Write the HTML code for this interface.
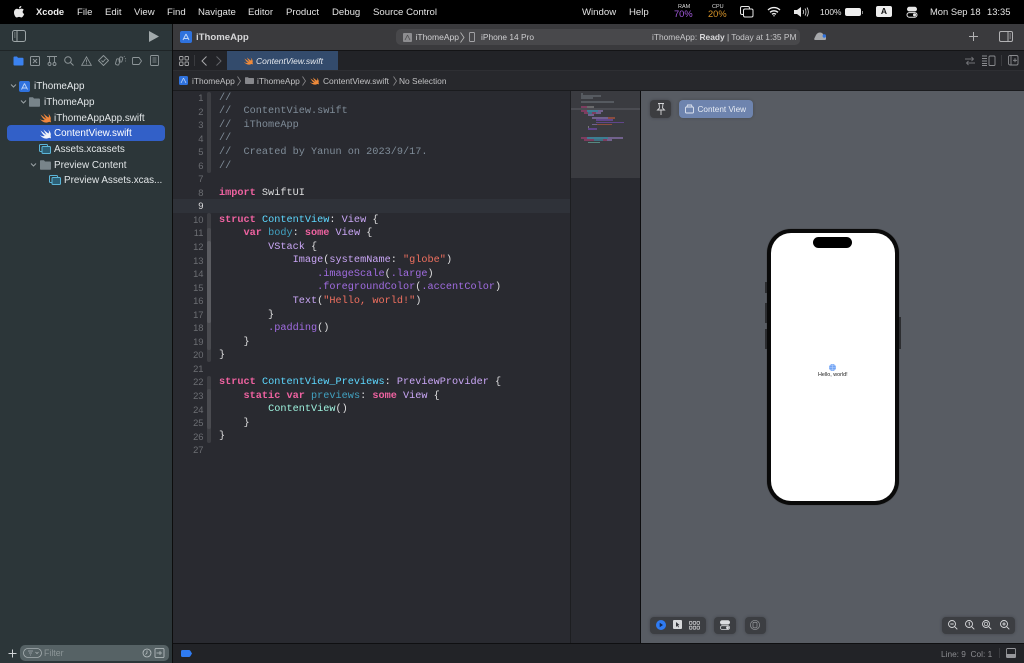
<!DOCTYPE html>
<html><head><meta charset="utf-8"><style>
*{box-sizing:border-box;margin:0;padding:0}
html,body{width:1024px;height:663px;overflow:hidden;background:#292a30;font-family:"Liberation Sans",sans-serif}
#w{position:absolute;left:0;top:0;width:1024px;height:663px;overflow:hidden;filter:blur(.35px)}
.a{position:absolute}
.t{position:absolute;white-space:nowrap;line-height:14px}
.m{top:6px;font-size:9.6px;color:#e4e4e4}
.s{font-size:9.9px;color:#e2e6e8}
.p{top:73.5px;font-size:8.4px;color:#c0c0c2}
svg{position:absolute;overflow:visible}
#code{position:absolute;left:219px;top:91.8px;font:10.22px/13.54px "Liberation Mono",monospace;color:#dfdfe0;white-space:pre}
#nums{position:absolute;left:180px;width:23.5px;top:91px;font:9.4px/13.54px "Liberation Sans",sans-serif;color:#6c6e73;text-align:right}
.c{color:#7f8c98}.k{color:#ee62a0;font-weight:bold}.b{color:#5dd8ff}.v{color:#c9a6f5}.st{color:#f0705f}.f{color:#a06ce0}.d{color:#41a1c0}.g{color:#9ef1dd}
.bar{position:absolute;left:207px;width:4px;background:#3d3e43;border-radius:2px}
.mm{position:absolute;height:1.5px;opacity:.8}
</style></head><body><div id="w">
<!-- menu bar -->
<div class="a" style="left:0;top:0;width:1024px;height:24px;background:#000"></div>
<svg style="left:13px;top:5px" width="12" height="14" viewBox="0 0 12 14"><path d="M8.3 1C8.4 2.4 7.2 3.5 6 3.4 5.900 2.200 7 1 8.300 1ZM6 4.200C6.700 4.200 7.400 3.600 8.500 3.600 9.400 3.600 10.300 4.100 10.800 4.900 9.100 5.900 9.400 8.300 11.200 9 10.700 10.400 9.500 12.500 8.400 12.500 7.500 12.500 7.100 11.900 6.100 11.900 5.100 11.900 4.600 12.500 3.800 12.500 2.500 12.500 1 9.900 1 7.600 1 5.200 2.500 3.800 3.900 3.800 4.800 3.800 5.400 4.200 6 4.200Z" fill="#e8e8e8"/></svg>
<div class="t m" style="left:36px;top:5px;font-weight:bold;color:#eee;font-size:9.4px">Xcode</div>
<div class="t m" style="left:77px">File</div>
<div class="t m" style="left:105px">Edit</div>
<div class="t m" style="left:134px">View</div>
<div class="t m" style="left:167px">Find</div>
<div class="t m" style="left:198px">Navigate</div>
<div class="t m" style="left:248px">Editor</div>
<div class="t m" style="left:286px">Product</div>
<div class="t m" style="left:332px">Debug</div>
<div class="t m" style="left:373px">Source Control</div>
<div class="t m" style="left:582px">Window</div>
<div class="t m" style="left:629px">Help</div>
<div class="t" style="left:678px;top:4px;font-size:5.500px;line-height:7px;color:#ddd">RAM</div>
<div class="t" style="left:674px;top:9px;font-size:9.300px;line-height:11px;color:#a55be0">70%</div>
<div class="t" style="left:712px;top:4px;font-size:5.500px;line-height:7px;color:#ddd">CPU</div>
<div class="t" style="left:708px;top:9px;font-size:9.300px;line-height:11px;color:#d9952a">20%</div>
<svg style="left:740px;top:6px" width="14" height="12" fill="none" stroke="#e6e6e6" stroke-width="1"><rect x="0.500" y="0.500" width="9" height="8" rx="1.500"/><rect x="3.500" y="3" width="9.500" height="8" rx="1.500" fill="#000"/></svg>
<svg style="left:767px;top:6px" width="14" height="11" fill="none" stroke="#eee" stroke-width="1.400"><path d="M1 4C4.500.8 9.500.8 13 4M3 6.300C5.300 4.300 8.700 4.300 11 6.300M5 8.300C6.200 7.400 7.800 7.400 9 8.300"/><circle cx="7" cy="9.800" r=".7" fill="#eee" stroke="none"/></svg>
<svg style="left:794px;top:6px" width="15" height="12" fill="none" stroke="#e6e6e6"><path d="M0 4H3L7 1V11L3 8H0Z" fill="#e6e6e6" stroke="none"/><path d="M9 4C9.700 5 9.700 7 9 8M11 2.500C12.300 4.500 12.300 7.500 11 9.500M13 1.500C14.800 4.500 14.800 7.500 13 10.500" stroke-width=".8"/></svg>
<div class="t m" style="left:820px;top:5px;font-size:8.400px">100%</div>
<div class="a" style="left:845px;top:8px;width:16px;height:8px;border-radius:2px;background:#eee"></div>
<div class="a" style="left:862px;top:10.500px;width:1px;height:3px;background:#888"></div>
<div class="a" style="left:876px;top:6px;width:16px;height:11px;border-radius:2px;background:#eee;color:#111;font-size:8.500px;line-height:11px;text-align:center;font-weight:bold">A</div>
<svg style="left:906px;top:6px" width="12" height="12"><rect x="1" y=".8" width="10" height="4.600" rx="2.300" fill="#e6e6e6"/><rect x="1" y="6.600" width="10" height="4.600" rx="2.300" fill="none" stroke="#e6e6e6"/><circle cx="8.500" cy="8.900" r="1.500" fill="#e6e6e6"/></svg>
<div class="t m" style="left:930px;top:5px;font-size:9.400px">Mon Sep 18</div>
<div class="t m" style="left:987px;top:5px;font-size:9.400px">13:35</div>

<!-- sidebar -->
<div class="a" style="left:0;top:24px;width:172px;height:639px;background:#2c3639"></div>
<div class="a" style="left:0;top:50px;width:172px;height:1px;background:#1f2527"></div>
<div class="a" style="left:172px;top:24px;width:1px;height:639px;background:#0d0d0d"></div>
<svg style="left:12px;top:30px" width="15" height="13" fill="none" stroke="#9ea6a8"><rect x=".5" y=".5" width="13" height="11" rx="2"/><path d="M5 .5V11.500"/><path d="M2 3H3.500M2 5H3.500M2 7H3.500" stroke-width=".7"/></svg>
<svg style="left:148px;top:30px" width="12" height="13"><path d="M1 1L11 6.500L1 12Z" fill="#a2aaac"/></svg>
<!-- nav icons -->
<svg style="left:13px;top:56px" width="11" height="10"><path d="M.5 1.500Q.5.500 1.500.500H4L5 1.800H9.500Q10.500 1.800 10.500 2.800V8.500Q10.500 9.500 9.500 9.500H1.500Q.5 9.500.5 8.500Z" fill="#3b82f0"/></svg>
<svg style="left:30px;top:56px" width="10" height="10" fill="none" stroke="#8e9699"><rect x=".5" y=".5" width="9" height="9" rx="1"/><path d="M3 3L7 7M7 3L3 7"/></svg>
<svg style="left:47px;top:56px" width="10" height="10" fill="none" stroke="#8e9699" stroke-width=".9"><path d="M0 .5H10M2.500.5V6M7.500.5V6"/><circle cx="2.500" cy="8" r="1.500"/><circle cx="7.500" cy="8" r="1.500"/></svg>
<svg style="left:64px;top:56px" width="10" height="10" fill="none" stroke="#8e9699" stroke-width="1"><circle cx="4" cy="4" r="3.300"/><path d="M6.500 6.500L9.500 9.500"/></svg>
<svg style="left:81px;top:56px" width="11" height="10" fill="none" stroke="#8e9699" stroke-width=".9"><path d="M5.500.8L10.300 9.300H.7Z"/><path d="M5.500 3.500V6.500M5.500 7.300V8.300"/></svg>
<svg style="left:98px;top:55px" width="11" height="11" fill="none" stroke="#8e9699" stroke-width=".9"><path d="M5.500.5L10.500 5.500L5.500 10.500L.5 5.500Z" stroke-linejoin="round"/><path d="M3.500 5.500L5 7L7.500 4"/></svg>
<svg style="left:115px;top:55px" width="12" height="11" fill="none" stroke="#8e9699" stroke-width=".9"><rect x="1" y="4" width="3.500" height="6" rx="1" transform="rotate(15 3 7)"/><rect x="4.500" y="2" width="3" height="5" rx="1" transform="rotate(15 6 4)"/><path d="M9 1L9.500 2M11 3.500L10 4M11 6H10" stroke-width=".7"/></svg>
<svg style="left:132px;top:57px" width="10" height="8" fill="none" stroke="#8e9699" stroke-width=".9"><path d="M1.500.5H7L9.500 4L7 7.500H1.500Q.5 7.500.5 6.500V1.500Q.5.500 1.500.500Z"/></svg>
<svg style="left:150px;top:55px" width="9" height="11" fill="none" stroke="#8e9699" stroke-width=".9"><rect x=".5" y=".5" width="8" height="10" rx="1"/><path d="M2.500 3H6.500M2.500 5H6.500M2.500 7H6.500" stroke-width=".7"/></svg>
<!-- tree -->
<div class="a" style="left:7px;top:125px;width:158px;height:16px;border-radius:4px;background:#3260c8"></div>
<svg style="left:10px;top:83px" width="7" height="6" fill="none" stroke="#9aa2a5"><path d="M1 1.500L3.500 4L6 1.500"/></svg>
<svg style="left:20px;top:99px" width="7" height="6" fill="none" stroke="#9aa2a5"><path d="M1 1.500L3.500 4L6 1.500"/></svg>
<svg style="left:30px;top:162px" width="7" height="6" fill="none" stroke="#9aa2a5"><path d="M1 1.500L3.500 4L6 1.500"/></svg>
<svg style="left:19px;top:81px" width="11" height="11"><rect width="11" height="11" rx="2" fill="#2f72de"/><path d="M5.500 2.500L8.500 8.500M5.500 2.500L2.500 8.500M3 7H8" stroke="#bcd4f7" fill="none" stroke-width=".9"/></svg>
<div class="t s" style="left:34px;top:80px;color:#e6eaec">iThomeApp</div>
<svg style="left:29px;top:97px" width="11" height="10"><path d="M0 1Q0 .3.8.3H4L5 1.500H10Q11 1.500 11 2.500V9Q11 9.800 10 9.800H1Q0 9.800 0 9Z" fill="#78848a"/></svg>
<div class="t s" style="left:44px;top:96px">iThomeApp</div>
<svg style="left:40px;top:113px" width="11" height="10"><path d="M.5 1.500C3 3.500 5 5 6.500 6C5 3.500 4 2 3.500.5C5.500 2.500 7 3.500 8.500 4.500C9.800 2.500 8 .5 8 .5C10 2 11.500 5 10.500 7C11 8 11 9.500 11 9.500C10 8.500 9 8.800 8 9.300C5.500 10.200 2 9 0 6C2 7.300 3.800 7.500 4.800 7C3 5.800 1.500 3.500.5 1.500Z" fill="#f0863c"/></svg>
<div class="t s" style="left:54px;top:111.500px">iThomeAppApp.swift</div>
<svg style="left:40px;top:129px" width="11" height="10"><path d="M.5 1.500C3 3.500 5 5 6.500 6C5 3.500 4 2 3.500.5C5.500 2.500 7 3.500 8.500 4.500C9.800 2.500 8 .5 8 .5C10 2 11.500 5 10.500 7C11 8 11 9.500 11 9.500C10 8.500 9 8.800 8 9.300C5.500 10.200 2 9 0 6C2 7.300 3.800 7.500 4.800 7C3 5.800 1.500 3.500.5 1.500Z" fill="#f2f4fa"/></svg>
<div class="t s" style="left:54px;top:127px;color:#fff">ContentView.swift</div>
<svg style="left:39px;top:144px" width="12" height="10" fill="none" stroke="#5bb5d8"><rect x=".5" y=".5" width="8" height="7" rx="1"/><rect x="3" y="2.500" width="8.500" height="7" rx="1" fill="#2c5f75"/></svg>
<div class="t s" style="left:54px;top:143px">Assets.xcassets</div>
<svg style="left:40px;top:160px" width="11" height="10"><path d="M0 1Q0 .3.8.3H4L5 1.500H10Q11 1.500 11 2.500V9Q11 9.800 10 9.800H1Q0 9.800 0 9Z" fill="#78848a"/></svg>
<div class="t s" style="left:54px;top:158.500px">Preview Content</div>
<svg style="left:49px;top:175px" width="12" height="10" fill="none" stroke="#5bb5d8"><rect x=".5" y=".5" width="8" height="7" rx="1"/><rect x="3" y="2.500" width="8.500" height="7" rx="1" fill="#2c5f75"/></svg>
<div class="t s" style="left:64px;top:174px">Preview Assets.xcas...</div>
<!-- filter -->
<svg style="left:8px;top:649px" width="9" height="9" stroke="#d0d4d6" stroke-width="1"><path d="M4.500.5V8.500M.5 4.500H8.500"/></svg>
<div class="a" style="left:20px;top:645px;width:149px;height:16px;border-radius:5px;background:#566265"></div>
<svg style="left:23px;top:648px" width="20" height="10" fill="none" stroke="#a7afb1" stroke-width=".8"><rect x=".5" y=".5" width="18" height="9" rx="4.500"/><path d="M5 3H10M6 5H9M7 7H8M12.500 4L14 5.500L15.500 4"/></svg>
<div class="t" style="left:44px;top:646px;font-size:8.800px;color:#8d9698">Filter</div>
<svg style="left:142px;top:648px" width="23" height="10" fill="none" stroke="#bcc3c5" stroke-width=".8"><circle cx="5" cy="5" r="4"/><path d="M5 2.500V5L3.500 6.500"/><rect x="13" y=".5" width="9" height="9" rx="1"/><path d="M14.500 5H16.500M18 3V7M16.500 5H20" stroke-width=".7"/></svg>

<!-- top toolbar -->
<div class="a" style="left:173px;top:24px;width:851px;height:26px;background:#3a3a3d"></div>
<div class="a" style="left:173px;top:50px;width:851px;height:1px;background:#141416"></div>
<svg style="left:180px;top:31px" width="12" height="12"><rect width="12" height="12" rx="2" fill="#2f72de"/><path d="M6 3L9 9M6 3L3 9M3.500 7.500H8.500" stroke="#bcd4f7" fill="none"/></svg>
<div class="t" style="left:196px;top:31px;font-size:9.600px;font-weight:bold;color:#d6d6d8">iThomeApp</div>
<div class="a" style="left:396px;top:29px;width:404px;height:16px;border-radius:5px;background:#48484b"></div>
<svg style="left:403px;top:32.500px" width="9" height="9"><rect width="9" height="9" rx="1" fill="#8d8d90"/><path d="M4.500 2L7 7M4.500 2L2 7" stroke="#4c4c4f" fill="none" stroke-width=".8"/></svg>
<div class="t" style="left:415.500px;top:30px;font-size:8.500px;color:#cfcfd1">iThomeApp</div>
<svg style="left:460px;top:31.500px" width="5" height="11" fill="none" stroke="#bbb" stroke-width=".8"><path d="M.5.500L4 5.500L.5 10.500"/></svg>
<svg style="left:469px;top:32px" width="6" height="10" fill="none" stroke="#a4a4a7" stroke-width=".9"><rect x=".5" y=".5" width="5" height="9" rx=".8"/></svg>
<div class="t" style="left:481px;top:30px;font-size:8.400px;color:#cfcfd1">iPhone 14 Pro</div>
<div class="t" style="left:652px;top:30px;font-size:8.400px;color:#c8c8ca">iThomeApp: <b style="color:#d8d8da">Ready</b> | Today at 1:35 PM</div>
<svg style="left:814px;top:32px" width="13" height="9"><path d="M1 8Q0 8 .3 6.500L2 3Q3.500.5 6 .5Q8.500.5 9.500 3L12 4V7Q12 8 11 8Z" fill="#a6a8ab"/><circle cx="10.300" cy="4" r="1.700" fill="#2f72de"/></svg>
<svg style="left:969px;top:32px" width="9" height="9" stroke="#b2b2b4"><path d="M4.500 0V9M0 4.500H9"/></svg>
<svg style="left:999px;top:31px" width="14" height="11" fill="none" stroke="#b2b2b4"><rect x=".5" y=".5" width="13" height="10" rx="1.500"/><path d="M9 .5V10.500"/><path d="M10.500 3H12M10.500 5H12M10.500 7H12" stroke-width=".7"/></svg>

<!-- tab bar -->
<div class="a" style="left:173px;top:51px;width:851px;height:19px;background:#222327"></div>
<div class="a" style="left:173px;top:70px;width:851px;height:1px;background:#2e2f33"></div>
<svg style="left:179px;top:56px" width="10" height="10" fill="none" stroke="#a4a4a6" stroke-width=".9"><rect x=".5" y=".5" width="3.500" height="3.500" rx=".7"/><rect x="6" y=".5" width="3.500" height="3.500" rx=".7"/><rect x=".5" y="6" width="3.500" height="3.500" rx=".7"/><rect x="6" y="6" width="3.500" height="3.500" rx=".7"/></svg>
<div class="a" style="left:194px;top:55px;width:1px;height:11px;background:#3a3b3f"></div>
<svg style="left:201px;top:56px" width="22" height="10" fill="none" stroke="#a8a8aa" stroke-width="1"><path d="M5.500.5L1 5L5.500 9.500"/><path d="M15.500.5L20 5L15.500 9.500" stroke="#64656a"/></svg>
<div class="a" style="left:227px;top:51px;width:111px;height:19px;background:#334b6c"></div>
<svg style="left:244px;top:57px" width="9" height="8"><path d="M.5 1.500C3 3.300 4 4 5.500 5C4.200 3 3.200 1.700 3 .5C4.500 2 6 3 7 3.600C8 2 6.500.5 6.500.5C8.200 1.800 9.300 4 8.500 5.700C9 6.500 9 7.500 9 7.500C8 6.800 7.300 7 6.500 7.400C4.500 8.200 1.500 7 0 5C1.500 6 3 6.200 3.900 5.700C2.400 4.700 1.200 3 .5 1.500Z" fill="#ee8a3a"/></svg>
<div class="t" style="left:256px;top:54px;font-size:8.500px;font-style:italic;color:#e6e9ee">ContentView.swift</div>
<svg style="left:965px;top:56px" width="10" height="10" fill="none" stroke="#727377" stroke-width=".9"><path d="M0 3H8.500M6.500 1L8.500 3L6.500 5M10 7H1.500M3.500 5L1.500 7L3.500 9"/></svg>
<svg style="left:982px;top:55px" width="14" height="11" fill="none" stroke="#8b8c90" stroke-width=".9"><path d="M0 1H5M0 3.500H5M0 6H5M0 8.500H5M0 10.500H5"/><rect x="7" y="1" width="6" height="9.500" rx="1"/></svg>
<div class="a" style="left:1001px;top:55px;width:1px;height:11px;background:#38393d"></div>
<svg style="left:1008px;top:55px" width="11" height="11" fill="none" stroke="#8b8c90" stroke-width=".9"><rect x=".5" y=".5" width="9.500" height="9.500" rx="1.500"/><path d="M3 .5V10M5 5.300H9M7 3.300V7.300"/></svg>

<!-- path bar -->
<div class="a" style="left:173px;top:71px;width:851px;height:19px;background:#27282c"></div>
<div class="a" style="left:173px;top:90px;width:851px;height:1px;background:#1a1b1e"></div>
<svg style="left:179px;top:76px" width="9" height="9"><rect width="9" height="9" rx="1.500" fill="#2f72de"/><path d="M4.500 2L7 7M4.500 2L2 7" stroke="#bcd4f7" fill="none" stroke-width=".8"/></svg>
<div class="t p" style="left:192px">iThomeApp</div>
<svg style="left:237px;top:75.500px" width="4" height="10" fill="none" stroke="#8a8a8d" stroke-width=".8"><path d="M.5.500L3.500 5L.5 9.500"/></svg>
<svg style="left:245px;top:77px" width="9" height="7"><path d="M0 .8Q0 .2.600 .2H3L3.800 1H8.300Q9 1 9 1.700V6.300Q9 7 8.300 7H.7Q0 7 0 6.300Z" fill="#87888c"/></svg>
<div class="t p" style="left:257px">iThomeApp</div>
<svg style="left:302px;top:75.500px" width="4" height="10" fill="none" stroke="#8a8a8d" stroke-width=".8"><path d="M.5.500L3.500 5L.5 9.500"/></svg>
<svg style="left:310px;top:77px" width="9" height="8"><path d="M.5 1.500C3 3.300 4 4 5.500 5C4.200 3 3.200 1.700 3 .5C4.500 2 6 3 7 3.600C8 2 6.500.5 6.500.5C8.200 1.800 9.300 4 8.500 5.700C9 6.500 9 7.500 9 7.500C8 6.800 7.300 7 6.500 7.400C4.500 8.200 1.500 7 0 5C1.500 6 3 6.200 3.900 5.700C2.400 4.700 1.200 3 .5 1.500Z" fill="#ee8a3a"/></svg>
<div class="t p" style="left:323px">ContentView.swift</div>
<svg style="left:392.500px;top:75.500px" width="4" height="10" fill="none" stroke="#8a8a8d" stroke-width=".8"><path d="M.5.500L3.500 5L.5 9.500"/></svg>
<div class="t p" style="left:399px">No Selection</div>

<!-- editor -->
<div class="a" style="left:173px;top:91px;width:398px;height:552px;background:#292a30"></div>
<div class="a" style="left:173px;top:199px;width:398px;height:14px;background:#2f3239"></div>
<div class="bar" style="top:92px;height:81px"></div>
<div class="bar" style="top:213px;height:149px"></div>
<div class="bar" style="top:228px;height:122px;background:#4a4b50"></div>
<div class="bar" style="top:241px;height:82px;background:#5b5c61"></div>
<div class="bar" style="top:376px;height:67px"></div>
<div class="bar" style="top:389px;height:40px;background:#4a4b50"></div>
<div id="nums">1<br>2<br>3<br>4<br>5<br>6<br>7<br>8<br><span style="color:#dfdfe0">9</span><br>10<br>11<br>12<br>13<br>14<br>15<br>16<br>17<br>18<br>19<br>20<br>21<br>22<br>23<br>24<br>25<br>26<br>27</div>
<div id="code"><span class="c">//
//  ContentView.swift
//  iThomeApp
//
//  Created by Yanun on 2023/9/17.
//</span>

<span class="k">import</span> SwiftUI

<span class="k">struct</span> <span class="b">ContentView</span>: <span class="v">View</span> {
    <span class="k">var</span> <span class="d">body</span>: <span class="k">some</span> <span class="v">View</span> {
        <span class="v">VStack</span> {
            <span class="v">Image</span>(<span class="v">systemName</span>: <span class="st">"globe"</span>)
                <span class="f">.imageScale</span>(<span class="f">.large</span>)
                <span class="f">.foregroundColor</span>(<span class="f">.accentColor</span>)
            <span class="v">Text</span>(<span class="st">"Hello, world!"</span>)
        }
        <span class="f">.padding</span>()
    }
}

<span class="k">struct</span> <span class="b">ContentView_Previews</span>: <span class="v">PreviewProvider</span> {
    <span class="k">static</span> <span class="k">var</span> <span class="d">previews</span>: <span class="k">some</span> <span class="v">View</span> {
        <span class="g">ContentView</span>()
    }
}
</div>

<!-- minimap -->
<div class="a" style="left:570px;top:91px;width:1px;height:552px;background:#1d1e21"></div>
<div class="a" style="left:571px;top:91px;width:69px;height:87px;background:#3a3b40"></div>
<div class="a" style="left:571px;top:108px;width:69px;height:2px;background:#4b4c52"></div>
<div class="mm" style="left:581px;top:93px;width:2px;background:#5e6368"></div>
<div class="mm" style="left:581px;top:95px;width:20px;background:#5e6368"></div>
<div class="mm" style="left:581px;top:97px;width:12px;background:#5e6368"></div>
<div class="mm" style="left:581px;top:101px;width:33px;background:#5e6368"></div>
<div class="mm" style="left:581px;top:106px;width:6px;background:#8f3f66"></div>
<div class="mm" style="left:587px;top:106px;width:7px;background:#777"></div>
<div class="mm" style="left:581px;top:110px;width:6px;background:#8f3f66"></div>
<div class="mm" style="left:587px;top:110px;width:11px;background:#3e8fa8"></div>
<div class="mm" style="left:598px;top:110px;width:5px;background:#7f6ba0"></div>
<div class="mm" style="left:584px;top:112px;width:4px;background:#8f3f66"></div>
<div class="mm" style="left:588px;top:112px;width:4px;background:#3e7f92"></div>
<div class="mm" style="left:592px;top:112px;width:4px;background:#8f3f66"></div>
<div class="mm" style="left:596px;top:112px;width:5px;background:#7f6ba0"></div>
<div class="mm" style="left:588px;top:114px;width:6px;background:#7f6ba0"></div>
<div class="mm" style="left:592px;top:117px;width:16px;background:#7f6ba0"></div>
<div class="mm" style="left:608px;top:117px;width:7px;background:#a0523e"></div>
<div class="mm" style="left:596px;top:119px;width:17px;background:#6a4a9e"></div>
<div class="mm" style="left:596px;top:121.500px;width:28px;background:#6a4a9e"></div>
<div class="mm" style="left:592px;top:123.500px;width:5px;background:#7f6ba0"></div>
<div class="mm" style="left:597px;top:123.500px;width:15px;background:#a0523e"></div>
<div class="mm" style="left:588px;top:126px;width:1px;background:#888"></div>
<div class="mm" style="left:588px;top:128px;width:9px;background:#6a4a9e"></div>
<div class="mm" style="left:581px;top:137px;width:6px;background:#8f3f66"></div>
<div class="mm" style="left:587px;top:137px;width:21px;background:#3e8fa8"></div>
<div class="mm" style="left:608px;top:137px;width:15px;background:#7f6ba0"></div>
<div class="mm" style="left:584px;top:139px;width:10px;background:#8f3f66"></div>
<div class="mm" style="left:594px;top:139px;width:9px;background:#3e7f92"></div>
<div class="mm" style="left:603px;top:139px;width:4px;background:#8f3f66"></div>
<div class="mm" style="left:607px;top:139px;width:5px;background:#7f6ba0"></div>
<div class="mm" style="left:588px;top:141.500px;width:12px;background:#5e9c90"></div>

<!-- preview pane -->
<div class="a" style="left:640px;top:91px;width:1px;height:552px;background:#0d0d0f"></div>
<div class="a" style="left:641px;top:91px;width:383px;height:552px;background:#585c63"></div>
<div class="a" style="left:650px;top:100px;width:21px;height:18px;border-radius:4px;background:#3c3d40;box-shadow:0 0 3px rgba(0,0,0,.25)"></div>
<svg style="left:657px;top:103px" width="8" height="13" fill="none" stroke="#d6d6d8" stroke-width=".9"><path d="M1 .5H7M2 .5L2.500 5L.5 7H7.500L5.500 5L6 .5M4 7V12"/></svg>
<div class="a" style="left:679px;top:100px;width:74px;height:18px;border-radius:4px;background:#6e84ae;box-shadow:0 0 3px rgba(0,0,0,.2)"></div>
<svg style="left:685px;top:104px" width="9" height="10" fill="none" stroke="#dfe5f0" stroke-width=".9"><path d="M.5 4Q.5 3 1.500 3H7.500Q8.500 3 8.500 4V8Q8.500 9 7.500 9H1.500Q.5 9 .5 8ZM1.800 3L2.500 1H6.500L7.200 3"/></svg>
<div class="t" style="left:697.500px;top:102.500px;font-size:8.200px;color:#e6ebf3">Content View</div>

<!-- phone -->
<div class="a" style="left:764.500px;top:282px;width:2px;height:11px;background:#2c2d30"></div>
<div class="a" style="left:764.500px;top:303px;width:2px;height:20px;background:#2c2d30"></div>
<div class="a" style="left:764.500px;top:329px;width:2px;height:20px;background:#2c2d30"></div>
<div class="a" style="left:899px;top:317px;width:2px;height:32px;background:#2c2d30"></div>
<div class="a" style="left:767px;top:229px;width:132px;height:276px;border-radius:24px;background:#0a0a0a;box-shadow:0 0 1px #333"></div>
<div class="a" style="left:771px;top:233px;width:123.500px;height:268px;border-radius:20px;background:#fff"></div>
<div class="a" style="left:813px;top:237px;width:39px;height:11px;border-radius:6px;background:#000"></div>
<svg style="left:829px;top:364px" width="7" height="7" fill="none"><circle cx="3.500" cy="3.500" r="3.500" fill="#6ea2f5"/><path d="M0 3.500H7M1 1.800H6M1 5.200H6M3.500 0V7" stroke="#cfe0fb" stroke-width=".4"/></svg>
<div class="t" style="left:818px;top:368px;font-size:5.400px;color:#222">Hello, world!</div>

<!-- preview bottom controls -->
<div class="a" style="left:650px;top:617px;width:56px;height:17px;border-radius:4px;background:#3c3e42;box-shadow:0 0 3px rgba(0,0,0,.25)"></div>
<svg style="left:656px;top:620px" width="10" height="10"><circle cx="5" cy="5" r="5" fill="#2f7bf2"/><path d="M3.700 2.800L7 5L3.700 7.200Z" fill="#10264f"/></svg>
<svg style="left:673px;top:620px" width="9" height="9"><rect width="9" height="9" rx="1" fill="#d8d9db"/><path d="M3 2L3 7L4.300 5.800L5.300 7.500L6 7L5 5.300L6.500 5Z" fill="#33353a"/></svg>
<svg style="left:689px;top:621px" width="11" height="9" fill="none" stroke="#c6c7ca" stroke-width=".8"><rect x=".4" y=".4" width="2.500" height="3" rx=".6"/><rect x="4.200" y=".4" width="2.500" height="3" rx=".6"/><rect x="8" y=".4" width="2.500" height="3" rx=".6"/><rect x=".4" y="5.200" width="2.500" height="3" rx=".6"/><rect x="4.200" y="5.200" width="2.500" height="3" rx=".6"/><rect x="8" y="5.200" width="2.500" height="3" rx=".6"/></svg>
<div class="a" style="left:714px;top:617px;width:22px;height:17px;border-radius:4px;background:#3c3e42;box-shadow:0 0 3px rgba(0,0,0,.25)"></div>
<svg style="left:720px;top:620px" width="10" height="10"><rect y=".3" width="10" height="4.200" rx="2.100" fill="#dcdde0"/><rect x=".4" y="5.700" width="9.200" height="3.800" rx="1.900" fill="none" stroke="#dcdde0" stroke-width=".8"/><circle cx="7.500" cy="7.600" r="1.400" fill="#dcdde0"/></svg>
<div class="a" style="left:745px;top:617px;width:21px;height:17px;border-radius:4px;background:#3c3e42;box-shadow:0 0 3px rgba(0,0,0,.25)"></div>
<svg style="left:750px;top:620px" width="10" height="10" fill="none" stroke="#8e9094" stroke-width=".8"><circle cx="5" cy="5" r="4.600"/><rect x="3" y="2.300" width="4" height="5.500" rx=".8"/></svg>
<div class="a" style="left:942px;top:617px;width:73px;height:17px;border-radius:4px;background:#3c3e42;box-shadow:0 0 3px rgba(0,0,0,.25)"></div>
<svg style="left:948px;top:620px" width="63" height="10" fill="none" stroke="#d8d9db" stroke-width=".9"><circle cx="4" cy="4" r="3.500"/><path d="M6.700 6.700L9.300 9.300M2.300 4H5.700"/><circle cx="21" cy="4" r="3.500"/><path d="M23.700 6.700L26.300 9.300M20.500 2.800L21.300 2.500V5.500"/><circle cx="38" cy="4" r="3.500"/><path d="M40.700 6.700L43.300 9.300"/><circle cx="38" cy="4" r="1.700" stroke-width=".7"/><circle cx="56" cy="4" r="3.500"/><path d="M58.700 6.700L61.300 9.300M54.300 4H57.700M56 2.300V5.700"/></svg>

<!-- status bar -->
<div class="a" style="left:173px;top:643px;width:851px;height:20px;background:#222327;border-top:1px solid #0f0f11"></div>
<svg style="left:181px;top:650px" width="11" height="7"><path d="M1.500 0H8Q9 0 9.500 1L11 3.500L9.500 6Q9 7 8 7H1.500Q0 7 0 5.500V1.500Q0 0 1.500 0Z" fill="#2f7bf2"/></svg>
<div class="t" style="left:941px;top:646.500px;font-size:8.300px;color:#8b8c90">Line: 9&nbsp; Col: 1</div>
<div class="a" style="left:999px;top:648px;width:1px;height:10px;background:#3a3b3f"></div>
<svg style="left:1006px;top:648px" width="10" height="10" fill="none" stroke="#96979b" stroke-width=".9"><rect x=".5" y=".5" width="9" height="9" rx="1"/><path d="M.5 6.500H9.500V8.500Q9.500 9.500 8.500 9.500H1.500Q.5 9.500.5 8.500Z" fill="#96979b"/></svg>
</div></body></html>
